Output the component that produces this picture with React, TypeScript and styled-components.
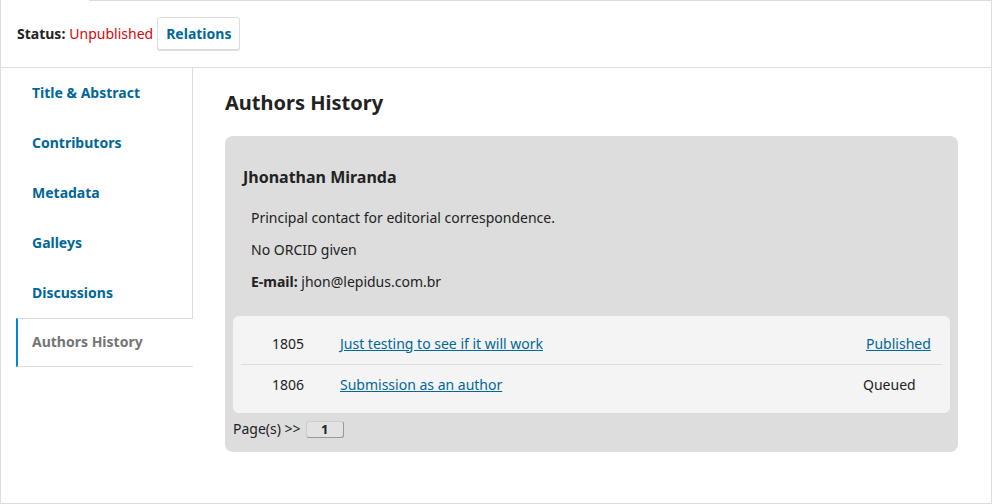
import React from "react";
import styled, { createGlobalStyle } from "styled-components";

const GlobalStyle = createGlobalStyle`
  html, body {
    margin: 0;
    padding: 0;
    background: #fff;
  }
  body {
    font-family: "Noto Sans", "Open Sans", sans-serif;
    color: #222;
    font-size: 14px;
  }
  * { box-sizing: border-box; }
`;

const tabs = ["Title & Abstract", "Contributors", "Metadata", "Galleys", "Discussions", "Authors History"];

const submissions = [
  { id: 1805, title: "Just testing to see if it will work", status: "Published", linked: true },
  { id: 1806, title: "Submission as an author", status: "Queued", linked: false },
];

const App = () => {
  return (
    <>
      <GlobalStyle />
      <Frame>
        <Header>
          <StatusLabel>Status:</StatusLabel>
          <StatusValue>Unpublished</StatusValue>
          <HeaderBtn>Relations</HeaderBtn>
        </Header>

        <Body>
          <TabList>
            {tabs.map((t) => (
              <Tab key={t} $active={t === "Authors History"}>
                {t}
              </Tab>
            ))}
          </TabList>

          <Content>
            <Heading>Authors History</Heading>
            <AuthorCard>
              <AuthorName>Jhonathan Miranda</AuthorName>
              <Detail>Principal contact for editorial correspondence.</Detail>
              <Detail>No ORCID given</Detail>
              <Detail>
                <b>E-mail:</b> jhon@lepidus.com.br
              </Detail>

              <SubmissionTable>
                {submissions.map((s) => (
                  <Row key={s.id}>
                    <IdCell>{s.id}</IdCell>
                    <TitleCell>
                      <Link href="#">{s.title}</Link>
                    </TitleCell>
                    <StatusCell $linked={s.linked}>
                      {s.linked ? <Link href="#">{s.status}</Link> : s.status}
                    </StatusCell>
                  </Row>
                ))}
              </SubmissionTable>

              <Pager>
                Page(s) &gt;&gt;
                <PageBtn>1</PageBtn>
              </Pager>
            </AuthorCard>
          </Content>
        </Body>
      </Frame>
    </>
  );
};
export default App;

const Frame = styled.div`
  position: relative;
  width: 992px;
  height: 504px;
  border-left: 1px solid #ddd;
  border-right: 1px solid #ddd;
  border-bottom: 1px solid #ddd;

  // top rule only starts after the cut-off tab area
  &::before {
    content: "";
    position: absolute;
    top: 0;
    left: 88px;
    right: -1px;
    height: 1px;
    background: #ddd;
  }
`;

const Header = styled.div`
  display: flex;
  align-items: center;
  height: 68px;
  padding: 0 16px;
  border-bottom: 1px solid #ddd;
  line-height: 20px;
`;

const StatusLabel = styled.span`
  font-weight: 700;
  margin-right: 4px;
`;

const StatusValue = styled.span`
  color: #d00a0a;
  margin-right: 4px;
`;

const HeaderBtn = styled.button`
  height: 33px;
  padding: 0 8px;
  font-family: inherit;
  font-size: 14px;
  font-weight: 700;
  color: #006798;
  background: #fff;
  border: 1px solid #ddd;
  border-radius: 3px;
  box-shadow: 0 1px 0 #ddd;
`;

const Body = styled.div`
  display: flex;
  align-items: flex-start;
`;

const TabList = styled.div`
  display: flex;
  flex-direction: column;
  width: 192px;
  flex-shrink: 0;
  padding-left: 15px;
  border-right: 1px solid #ddd;
`;

const Tab = styled.div<{ $active?: boolean }>`
  display: flex;
  align-items: center;
  padding: 0 0 2px 14px;
  font-weight: 700;
  font-size: 14px;
  color: ${({ $active }) => ($active ? "#757575" : "#006798")};
  border-left: 2px solid ${({ $active }) => ($active ? "#008acb" : "transparent")};
  border-top: 1px solid ${({ $active }) => ($active ? "#ddd" : "transparent")};
  border-bottom: 1px solid ${({ $active }) => ($active ? "#ddd" : "transparent")};
  background: #fff;
  margin-right: ${({ $active }) => ($active ? "-1px" : "0")};
  height: ${({ $active }) => ($active ? "49px" : "50px")};
`;

const Content = styled.div`
  flex: 1;
  padding: 20px 33px 0 32px;
`;

const Heading = styled.h2`
  margin: 0 0 19px;
  font-size: 20px;
  line-height: 29px;
  font-weight: 700;
`;

const AuthorCard = styled.div`
  background: #ddd;
  border-radius: 8px;
  padding: 29px 8px 13px;
`;

const AuthorName = styled.h3`
  margin: 0 0 19px 10px;
  font-size: 16px;
  line-height: 24px;
  font-weight: 700;
`;

const Detail = styled.p`
  margin: 0 0 12px 18px;
  line-height: 20px;
  font-size: 14px;

  &:last-of-type {
    margin-bottom: 24px;
  }
`;

const SubmissionTable = styled.div`
  background: #f4f4f4;
  border-radius: 6px;
  padding: 8px;
`;

const Row = styled.div`
  display: grid;
  grid-template-columns: 99px 1fr 76px;
  align-items: center;
  height: 40px;
  padding-bottom: 2px;

  & + & {
    border-top: 1px solid #ddd;
    height: 41px;
  }
`;

const IdCell = styled.div`
  padding-left: 31px;
`;

const TitleCell = styled.div``;

const StatusCell = styled.div<{ $linked?: boolean }>`
  margin-left: ${({ $linked }) => ($linked ? "0" : "-3px")};
`;

const Link = styled.a`
  color: #006798;
  text-decoration: underline;
`;

const Pager = styled.div`
  display: flex;
  align-items: center;
  gap: 5px;
  margin-top: 6px;
  line-height: 20px;
  font-size: 14px;
`;

const PageBtn = styled.span`
  display: inline-flex;
  justify-content: center;
  align-items: center;
  width: 38px;
  height: 17px;
  font-size: 13px;
  font-weight: 700;
  background: #e2e2e2;
  border: 1px solid #ccc;
  border-right-color: #999;
  border-bottom-color: #999;
  border-radius: 3px;
`;
